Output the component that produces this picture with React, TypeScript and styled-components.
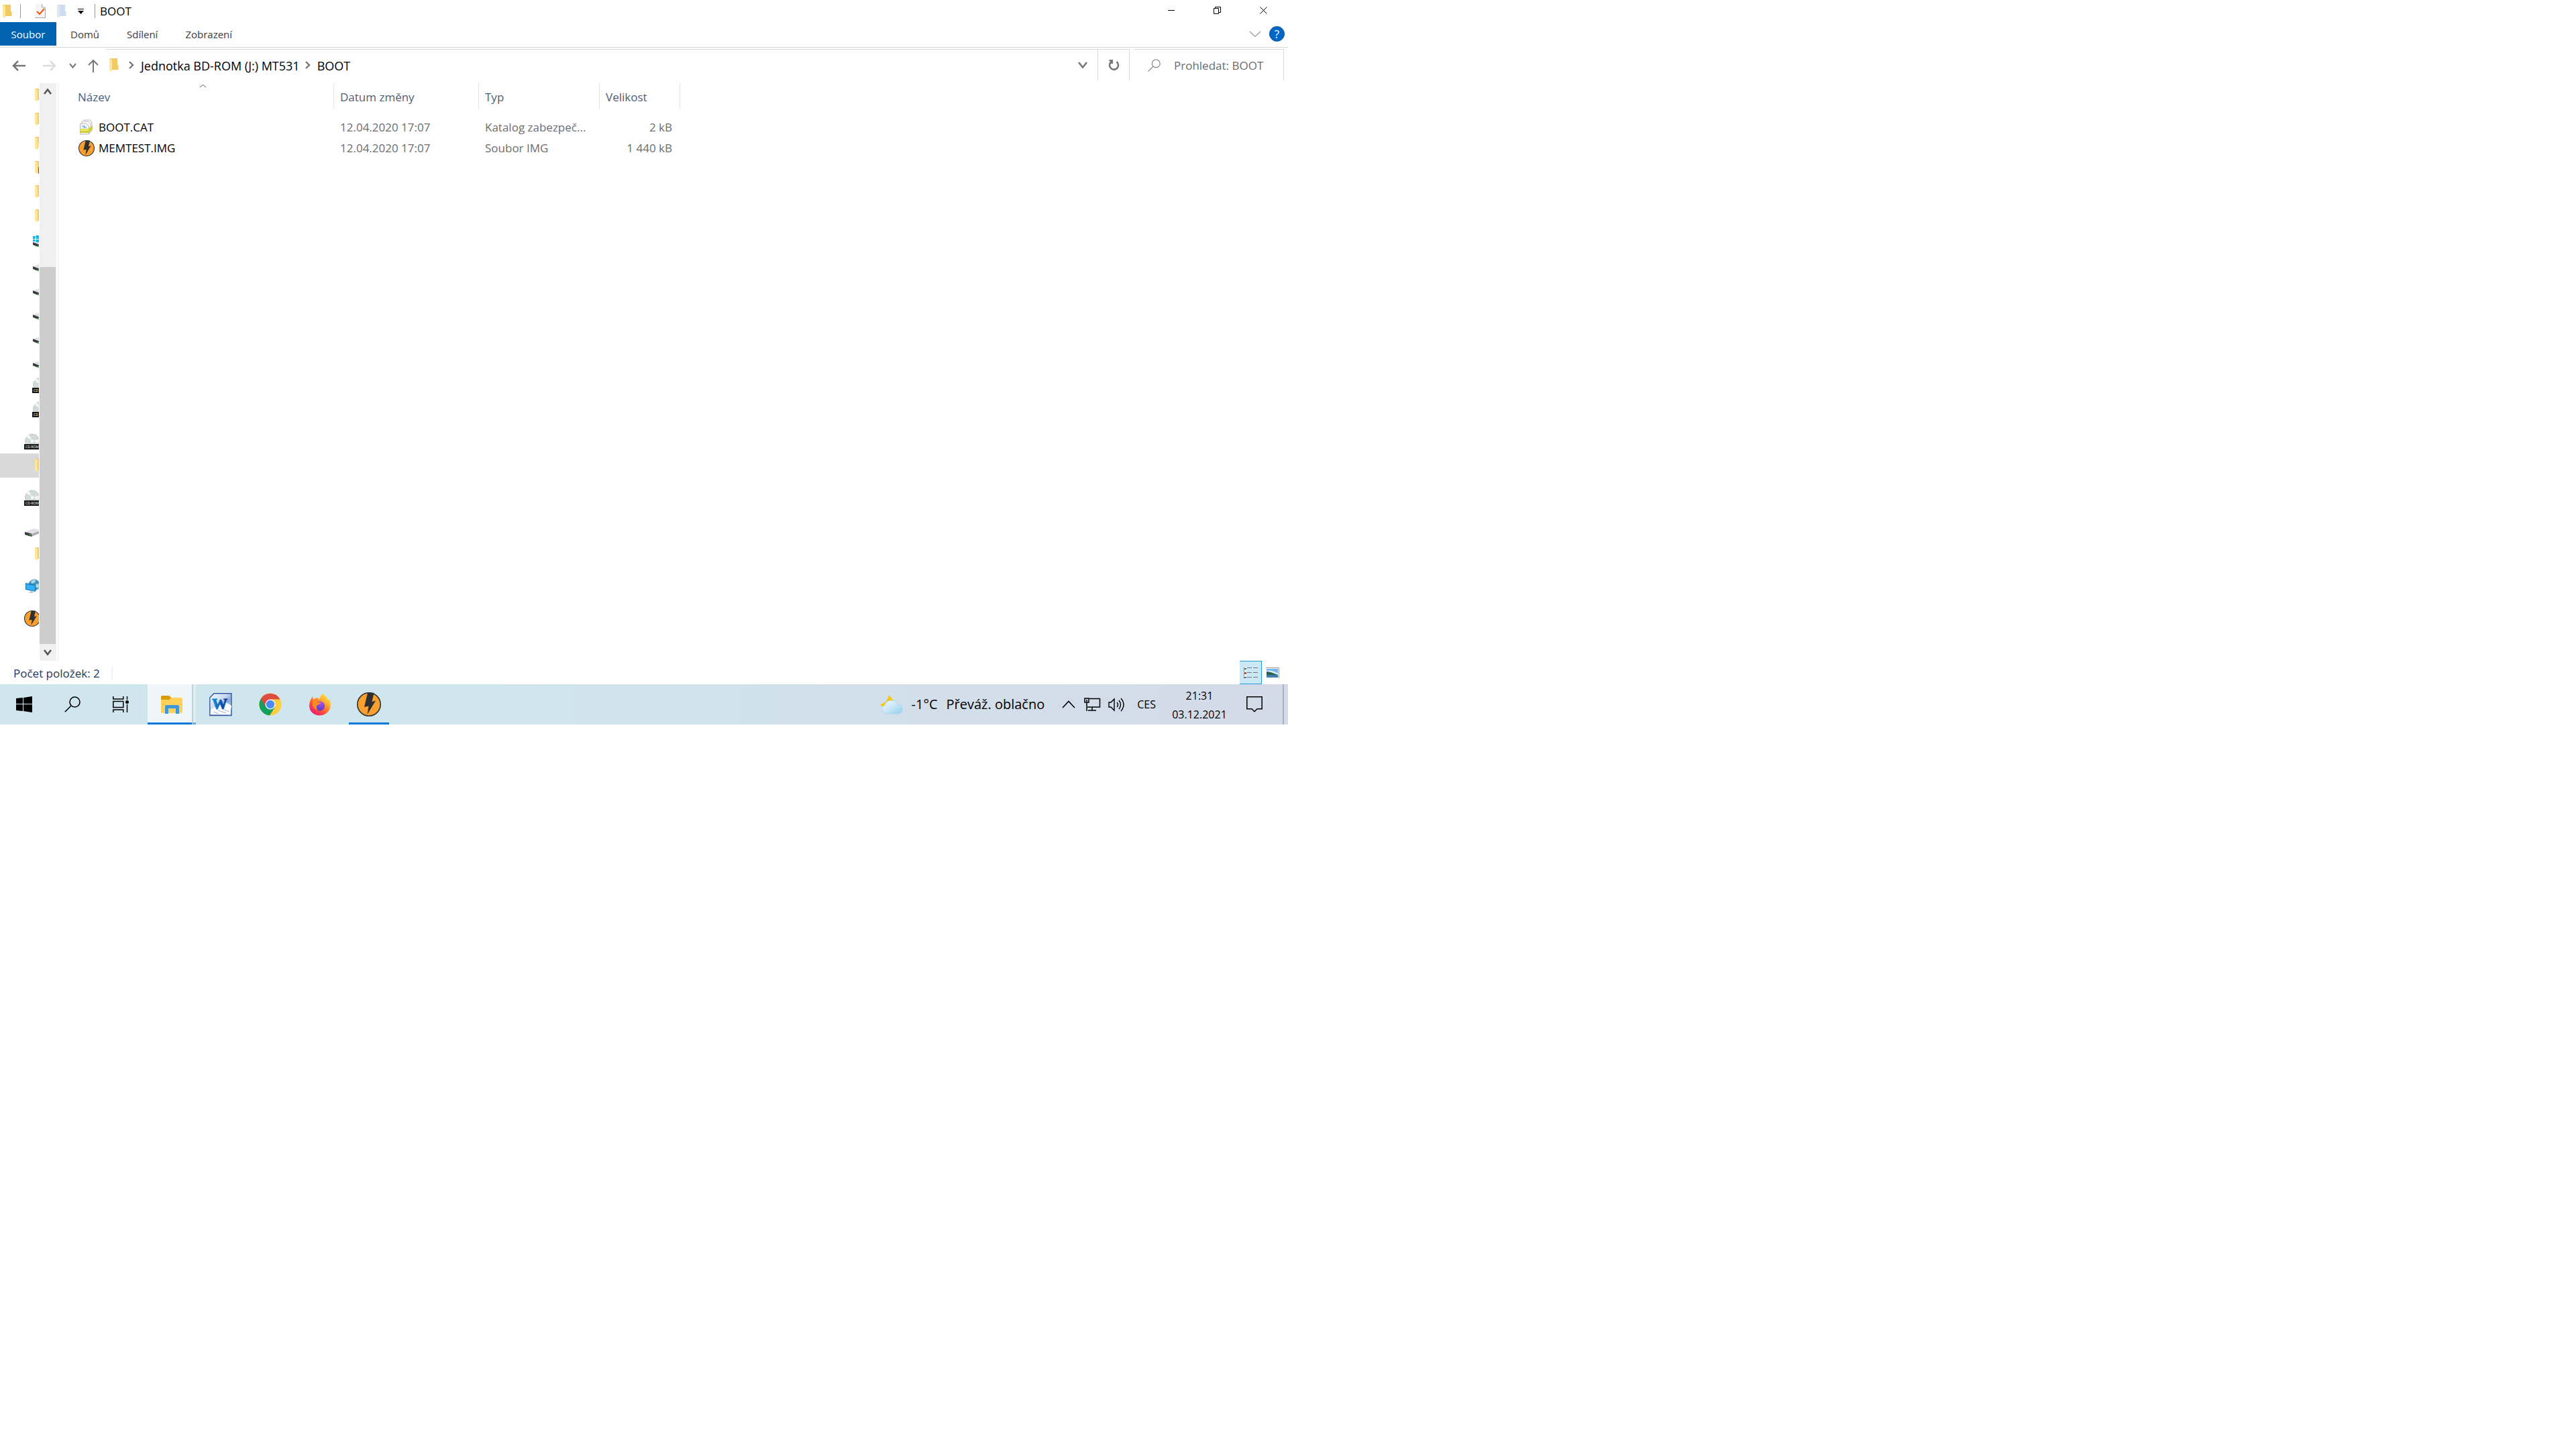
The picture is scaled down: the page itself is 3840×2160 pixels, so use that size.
import React from 'react';
import styled, { createGlobalStyle } from 'styled-components';

const GlobalStyle = createGlobalStyle`
  *, *::before, *::after { box-sizing: border-box; }
  body { margin: 0; background: #fff; font-family: "Open Sans", "Noto Sans", sans-serif; }
  button, input { font: inherit; color: inherit; }
  svg { display: block; flex: none; }
`;

const Desktop = styled.main`
  display: flex;
  flex-direction: column;
  width: 50%;
  height: 50vh;
  font-size: 17px;
  line-height: 24px;
  color: #000;
`;

const BareButton = styled.button`
  display: flex;
  align-items: center;
  justify-content: center;
  padding: 0;
  border: 0;
  background: none;
`;

/* ---------- title bar and ribbon ---------- */

const TitleBar = styled.header`
  display: flex;
  align-items: center;
  height: 33px;
  padding-left: 4px;
`;

const QuickAccess = styled.div`
  display: flex;
  align-items: center;
  flex: 1;
`;

const ToolDivider = styled.span`
  width: 1px;
  height: 21px;
  background: #9a9a9a;
`;

const QuickButton = styled(BareButton)<{ $gap: number }>`
  margin-left: ${(p) => p.$gap}px;
  height: 28px;
`;

const WindowTitle = styled.h1`
  margin: 0 0 0 7px;
  font-size: 17px;
  line-height: 24px;
  font-weight: 400;
`;

const WindowButton = styled(BareButton)`
  width: 69px;
  height: 31px;
`;

const WindowButtons = styled.div`
  display: flex;
  align-self: flex-start;
  padding-right: 2px;
`;

const Ribbon = styled.nav`
  display: flex;
  height: 38px;
  padding-bottom: 2px;
  border-bottom: 1px solid #d8d8d8;
  font-size: 15px;
  color: #3c3c3c;
`;

const FileTab = styled.button`
  width: 84px;
  padding: 0;
  border: 0;
  background: #0063b1;
  color: #fff;
`;

const RibbonTab = styled.button`
  padding: 1px 0 0 21px;
  margin-right: 20px;
  border: 0;
  background: none;
`;

const RibbonTools = styled.div`
  display: flex;
  align-items: center;
  gap: 12px;
  margin-left: auto;
  padding-right: 5px;
`;

const HelpButton = styled(BareButton)`
  width: 23px;
  height: 23px;
  border: 1px solid #0a4f8f;
  border-radius: 50%;
  background: #0067c8;
  color: #fff;
  font-size: 17px;
  line-height: 20px;
`;

/* ---------- address bar ---------- */

const AddressRow = styled.div`
  display: flex;
  height: 51px;
  padding: 2px 6px 2px 0;
`;

const NavButtons = styled.div`
  display: flex;
  align-items: center;
  width: 158px;
  padding: 2px 0 0 18px;
`;

const NavButton = styled(BareButton)<{ $after: number }>`
  margin-right: ${(p) => p.$after}px;
`;

const Breadcrumb = styled.nav`
  display: flex;
  align-items: center;
  flex: 1;
  padding-left: 5px;
  border-top: 1px solid #d9d9d9;
`;

const Crumb = styled.a`
  margin: 2px 8px 0 10px;
  color: inherit;
  font-size: 18px;
  text-decoration: none;
`;

const CrumbIcon = styled.span`
  margin-right: 15px;
`;

const AddressDrop = styled(BareButton)`
  width: 46px;
  height: 46px;
  margin-left: auto;
  border-right: 1px solid #d9d9d9;
`;

const RefreshButton = styled(BareButton)`
  width: 47px;
  border: 1px solid #d9d9d9;
  border-width: 1px 1px 0 0;
`;

const SearchBox = styled.label`
  display: flex;
  align-items: center;
  gap: 20px;
  width: 224px;
  margin-left: 6px;
  padding-left: 21px;
  border: 1px solid #d9d9d9;
  border-width: 1px 1px 0 0;
  color: #6d6d6d;
`;

const SearchInput = styled.input`
  flex: 1;
  min-width: 0;
  padding: 2px 0 0;
  border: 0;
  outline: 0;
  background: none;
  &::placeholder { color: #6d6d6d; opacity: 1; }
`;

/* ---------- body ---------- */

const Body = styled.div`
  display: flex;
  flex: 1;
  min-height: 0;
`;

const Tree = styled.ul`
  width: 58px;
  margin: 0;
  padding: 2px 0 0;
  overflow: hidden;
  list-style: none;
`;

const TreeItem = styled.li<{ $indent: number; $root?: boolean; $selected?: boolean }>`
  display: flex;
  align-items: center;
  height: 36px;
  margin-top: ${(p) => (p.$root ? 12 : 0)}px;
  padding-left: ${(p) => p.$indent}px;
  background: ${(p) => (p.$selected ? '#d9d9d9' : 'transparent')};
`;

const Scrollbar = styled.div`
  display: flex;
  flex-direction: column;
  width: 25px;
  margin: 2px 2px 0 1px;
  background: #f0f0f0;
`;

const ScrollButton = styled(BareButton)`
  height: 25px;
  padding-right: 1px;
`;

const ScrollTrack = styled.div`
  display: flex;
  flex: 1;
  flex-direction: column;
  justify-content: flex-end;
  padding-right: 1px;
`;

const ScrollThumb = styled.div`
  height: 69.3%;
  background: #cdcdcd;
`;

const Splitter = styled.div`
  width: 2px;
  margin-top: 2px;
  background: #f5f5f5;
`;

const Files = styled.section`
  flex: 1;
  padding-top: 2px;
`;

const FileTable = styled.table`
  table-layout: fixed;
  width: 926px;
  border-spacing: 0;
  color: #6d6d6d;
  tbody::before { content: ""; display: block; height: 11px; }
`;

const HeadCell = styled.th<{ $first?: boolean }>`
  position: relative;
  height: 39px;
  padding: 3px 0 0 ${(p) => (p.$first ? 28 : 9)}px;
  border-right: 1px solid #e3e3e3;
  color: #4c607a;
  font-size: 17px;
  font-weight: 400;
  text-align: left;
`;

const SortMark = styled.span`
  position: absolute;
  top: 1px;
  left: calc(50% + 4px);
`;

const Cell = styled.td<{ $right?: boolean }>`
  height: 31px;
  padding: 0 ${(p) => (p.$right ? 12 : 14)}px 0 9px;
  overflow: hidden;
  white-space: nowrap;
  text-overflow: ellipsis;
  text-align: ${(p) => (p.$right ? 'right' : 'left')};
`;

const NameCell = styled(Cell)`
  padding-left: 29px;
  color: #000;
`;

const FileName = styled.div`
  display: flex;
  align-items: center;
  gap: 6px;
`;

const Status = styled.footer`
  display: flex;
  align-items: center;
  height: 35px;
  padding: 0 13px 0 20px;
  color: #1e395b;
`;

const StatusText = styled.span`
  padding-top: 2px;
`;

const StatusDivider = styled.span`
  width: 2px;
  height: 20px;
  margin-left: 17px;
  background: #f2f2f2;
`;

const ViewButtons = styled.div`
  display: flex;
  align-items: center;
  gap: 6px;
  margin-left: auto;
`;

const DetailsButton = styled(BareButton)`
  width: 33px;
  height: 35px;
  border: 1px solid #26a0da;
  border-left: 0;
  background: #cbe8f6;
`;

/* ---------- taskbar ---------- */

const Taskbar = styled.footer`
  display: flex;
  height: 60px;
  background: linear-gradient(90deg, #d0e6ee 0%, #d0e6ee 36%, #d2dfea 72%, #d4dae8 100%);
`;

const TaskButton = styled(BareButton)<{ $width: number; $active?: boolean; $line?: boolean; $before?: number }>`
  position: relative;
  width: ${(p) => p.$width}px;
  margin-left: ${(p) => p.$before || 0}px;
  padding-top: ${(p) => (p.$line ? 3 : 0)}px;
  border-bottom: ${(p) => (p.$line ? '3px solid #0078d7' : '0')};
  background: ${(p) => (p.$active ? '#eff6f9' : 'none')};
`;

const StackEdge = styled.span`
  position: absolute;
  top: 0;
  right: 0;
  bottom: -3px;
  width: 6px;
  border-left: 2px solid #bfd2dc;
  border-bottom: 3px solid #66abe4;
  background: #e0eef4;
`;

const Tray = styled.div`
  display: flex;
  align-items: center;
  margin-left: auto;
`;

const Weather = styled(BareButton)`
  gap: 13px;
  margin-right: 26px;
  font-size: 20px;
`;

const TrayButton = styled(BareButton)<{ $after: number }>`
  margin-right: ${(p) => p.$after}px;
  font-size: 16px;
`;

const Clock = styled(BareButton)`
  flex-direction: column;
  gap: 4px;
  width: 84px;
  margin-right: 28px;
  padding-top: 1px;
  font-size: 16px;
`;

const ShowDesktop = styled.button`
  align-self: stretch;
  width: 8px;
  padding: 0;
  border: 0;
  border-left: 2px solid #a9b1c0;
  background: none;
`;

/* ---------- icons ---------- */

const FolderIcon = ({ blue }: { blue?: boolean }) => (
  <svg width="14" height="20" viewBox="0 0 14 20" aria-hidden="true">
    <path d="M0 0h12v10h1.500v7H4z" fill={blue ? '#cddcf0' : '#f0cb63'} />
    <path d="M0 0l4 2v18l-4-2z" fill={blue ? '#dde8f6' : '#ffe69c'} />
  </svg>
);

const TreeFolder = ({ mark }: { mark?: string }) => (
  <svg width="14" height="20" viewBox="0 0 14 20" aria-hidden="true">
    <path d="M0 0h12v17H3z" fill="#f0cb6a" />
    <path d="M0 0l4 2v18l-4-3z" fill="#ffe69c" />
    {mark && <path d="M5 9h8v10H5z" fill={mark} />}
  </svg>
);

const SmallDrive = ({ windows }: { windows?: boolean }) => (
  <svg width="24" height="24" viewBox="0 0 24 24" aria-hidden="true">
    <path d="M0 16l9-4 13 2v4l-9 5z" fill="#dcdee2" />
    <path d="M0 15l10 4v4L0 19z" fill="#3a3c3d" />
    <path d="M7 20h2v2H7z" fill="#3ecb4c" />
    {windows && <path d="M0 6h3.500v4H0zM4.500 5H9v5H4.500zM0 11h3.500v3H0zM4.500 11H9v4H4.500z" fill="#00b7f1" />}
  </svg>
);

const RootDrive = () => (
  <svg width="24" height="24" viewBox="0 0 24 24" aria-hidden="true">
    <path d="M0 15l13-5 11 2v4l-14 5z" fill="#dfe1e5" />
    <path d="M10 18l14-5v3l-14 6z" fill="#a8abb0" />
    <path d="M0 15l10 2.500v4.500L0 19z" fill="#3a3c3d" />
    <path d="M7 18h2v2H7z" fill="#3ecb4c" />
  </svg>
);

const Disc = ({ label }: { label: string }) => (
  <svg width="24" height="24" viewBox="0 0 24 24" aria-hidden="true">
    <circle cx="12" cy="11.500" r="10.500" fill="#d3dbd9" stroke="#b3bdbb" strokeWidth=".8" />
    <path d="M12 11L3 5l4-3zM12 11l9 4 1-6z" fill="#f3f7f6" />
    <circle cx="12" cy="11.500" r="3" fill="#f7fafa" stroke="#b7c1c0" strokeWidth=".6" />
    <path d="M0 16h24v8H0z" fill="#161616" />
    <text x="2" y="22" fontSize="5" fill="#fff" fontFamily="Open Sans, sans-serif">{label}</text>
  </svg>
);

const NetworkIcon = () => (
  <svg width="24" height="24" viewBox="0 0 24 24" aria-hidden="true">
    <circle cx="13" cy="10" r="8.500" fill="#3f93bd" />
    <path d="M8 4q4-3 8-1l-3 4-4 1zM16 8l5 1-2 6-4-2z" fill="#a7d8e6" />
    <path d="M0 7l15 3v10L0 17z" fill="#1c6fae" />
    <path d="M1 8.500l13 2.500v8L1 16z" fill="#2fb0f8" />
    <path d="M4 21l5-2 4 2-4 1z" fill="#bcc7cf" />
  </svg>
);

const BoltIcon = ({ size }: { size: number }) => (
  <svg width={size} height={size} viewBox="0 0 36 36" aria-hidden="true">
    <circle cx="18" cy="18" r="17.200" fill="#fba02e" stroke="#2e3032" strokeWidth="1.600" />
    <path d="M16 .8h9.500L22.500 14l5.500-1.500L15.500 33l2-12.500L11 22z" fill="#2e3032" />
  </svg>
);

const CatalogIcon = () => (
  <svg width="24" height="24" viewBox="0 0 24 24" aria-hidden="true">
    <path d="M8 1h9l3 3v13l-4 4H8z" fill="#f4f4f4" stroke="#bdbdbd" />
    <path d="M5 3h9l4 4v12H5z" fill="#fff" stroke="#bdbdbd" />
    <path d="M2.500 6h9l4 4v12h-13z" fill="#f7f7f7" stroke="#b5b5b5" />
    <path d="M5 10h5M7 12h5" stroke="#4a88d0" />
    <path d="M2 14h13l6-5v5l-6 6H2z" fill="#cfd02c" />
    <path d="M3 15h12v2H3z" fill="#f3f17b" />
  </svg>
);

const Chevron = ({ w, h, d, color, stroke }: { w: number; h: number; d: 'up' | 'down' | 'right'; color: string; stroke: number }) => {
  const paths = {
    up: `M1 ${h - 1}L${w / 2} 1.500L${w - 1} ${h - 1}`,
    down: `M1 1L${w / 2} ${h - 1.5}L${w - 1} 1`,
    right: `M1 1L${w - 2} ${h / 2}L1 ${h - 1}`,
  };
  return (
    <svg width={w} height={h} viewBox={`0 0 ${w} ${h}`} aria-hidden="true">
      <path d={paths[d]} fill="none" stroke={color} strokeWidth={stroke} />
    </svg>
  );
};

const Arrow = ({ kind }: { kind: 'back' | 'forward' | 'up' }) => {
  const d = { back: 'M20 9H2M9 2L2 9l7 7', forward: 'M0 9h18M11 2l7 7-7 7', up: 'M8 20V2M1 9l7-7 7 7' }[kind];
  return (
    <svg width={kind === 'up' ? 16 : 20} height={kind === 'up' ? 20 : 18} aria-hidden="true">
      <path d={d} fill="none" stroke={kind === 'forward' ? '#dcdcdc' : '#777'} strokeWidth={kind === 'up' ? 2 : 2.5} />
    </svg>
  );
};

const SheetIcon = () => (
  <svg width="17" height="21" aria-hidden="true">
    <path d="M.5.5h10l5 5v15H.5z" fill="#f5f5f5" />
    <path d="M10.500 0v5h5v15.500H0" fill="none" stroke="#a6a6a6" />
    <path d="M3 11l4 4 7-8" fill="none" stroke="#f0560e" strokeWidth="2" />
  </svg>
);

const QuickMenuIcon = () => (
  <svg width="9" height="8" aria-hidden="true"><path d="M0 0h9v1H0zM0 3h9L4.500 8z" fill="#000" /></svg>
);

const RefreshIcon = () => (
  <svg width="17" height="18" viewBox="0 0 17 18" aria-hidden="true">
    <path d="M12.500 4a6.500 6.500 0 1 1-8.500 .5" fill="none" stroke="#777" strokeWidth="2.600" />
    <path d="M1 1h6v6H4.500z" fill="#777" />
  </svg>
);

const Magnifier = ({ size, color, stroke }: { size: number; color: string; stroke: number }) => (
  <svg width={size} height={size} viewBox="0 0 24 24" aria-hidden="true">
    <circle cx="15.500" cy="8.500" r="7.500" fill="none" stroke={color} strokeWidth={stroke} />
    <path d="M10 14L.8 23.300" stroke={color} strokeWidth={stroke} />
  </svg>
);

const DetailsIcon = () => (
  <svg width="21" height="18" aria-hidden="true">
    <path d="M0 0h4v18H0z" fill="#fff" />
    <path d="M.5 0v18" stroke="#999" />
    <path d="M1 2h3v2H1zM1 15h3v2H1z" fill="#3b6ea8" />
    <path d="M1 8h3v3H1z" fill="#c8502c" />
    <path d="M5 1.500h7M14 1.500h7M5 8.500h7M14 8.500h7M5 15.500h7M14 15.500h7" stroke="#777" />
  </svg>
);

const PictureIcon = () => (
  <svg width="20" height="16" aria-hidden="true">
    <path d="M0 .5h19.500V16" fill="none" stroke="#999" />
    <path d="M1 2h17v13H1z" fill="#76b4f2" />
    <path d="M1 5q8-2 17 4v2H1z" fill="#d6ecfa" />
    <path d="M1 6l6 1 11 4v1H1z" fill="#2c6148" />
    <path d="M1 11h17v4H1z" fill="#3f7bab" />
  </svg>
);

const WindowsIcon = () => (
  <svg width="24" height="24" aria-hidden="true">
    <path d="M0 3l10-1v9H0zM11 2l13-2v11H11zM0 12h10v10L0 21zM11 12h13v12l-13-2z" />
  </svg>
);

const TaskViewIcon = () => (
  <svg width="24" height="24" aria-hidden="true" fill="none" stroke="#000" strokeWidth="1.500">
    <path d="M.8 0v4h15V0M.8 24v-4h15v4M.8 7.500h15v9H.8zM21.500 0v5M21.500 12v12" />
    <circle cx="21.500" cy="8.500" r="2.500" fill="#000" stroke="none" />
  </svg>
);

const ExplorerIcon = () => (
  <svg width="32" height="27" aria-hidden="true">
    <path d="M0 2q0-2 2-2h10l3 3h14q3 0 3 3v17q0 3-3 3H2q-2 0-2-2z" fill="#ffd159" />
    <path d="M0 6V2q0-2 2-2h10l3 3-3 3z" fill="#d99a0b" />
    <path d="M6 27V16q0-2 2-2h17q2 0 2 2v11h-5v-8H11v8z" fill="#3c97dd" />
  </svg>
);

const WordIcon = () => (
  <svg width="34" height="35" viewBox="0 0 34 35" aria-hidden="true">
    <defs>
      <linearGradient id="wordPage" x1="0" y1="0" x2="1" y2="1">
        <stop offset="0" stopColor="#f5f9fe" /><stop offset=".4" stopColor="#cddcf3" /><stop offset=".6" stopColor="#8ba6d8" /><stop offset="1" stopColor="#dce7f7" />
      </linearGradient>
      <linearGradient id="wordLetter" x1="0" y1="0" x2="1" y2="0">
        <stop offset="0" stopColor="#1193dc" /><stop offset="1" stopColor="#0b3292" />
      </linearGradient>
    </defs>
    <path d="M7 .8h26v32.700H.8V7z" fill="url(#wordPage)" stroke="#34589c" strokeWidth="1.400" />
    <path d="M2 26l3-3 20-9 8 5-2 13H1.500z" fill="#fff" />
    <path d="M6 28l8 3M13 26l12 4M22 25l8 3" stroke="#9db2d8" />
    <text x="4" y="24" fontFamily="Liberation Serif, serif" fontWeight="700" fontSize="23" fill="url(#wordLetter)" stroke="url(#wordLetter)">W</text>
  </svg>
);

const ChromeIcon = () => (
  <svg width="34" height="34" viewBox="0 0 34 34" aria-hidden="true">
    <circle cx="17" cy="17" r="16.500" fill="#ffcd40" />
    <path d="M17 17L2.700 8.700A16.500 16.500 0 0 0 16 33.500L24 21z" fill="#159f5c" />
    <path d="M2.700 8.700A16.500 16.500 0 0 1 31.500 9.500H17L9.700 20z" fill="#dc4c40" />
    <circle cx="17" cy="17" r="7.500" fill="#fff" />
    <circle cx="17" cy="17" r="6.200" fill="#4c8bf5" />
  </svg>
);

const FirefoxIcon = () => (
  <svg width="32" height="33" viewBox="0 0 32 33" aria-hidden="true">
    <defs>
      <linearGradient id="foxBody" x1="1" y1="0" x2=".2" y2="1">
        <stop offset="0" stopColor="#fff24a" /><stop offset=".35" stopColor="#ffb52e" /><stop offset=".65" stopColor="#ff5a35" /><stop offset="1" stopColor="#ed0f78" />
      </linearGradient>
      <radialGradient id="foxGlobe" cx=".6" cy=".2" r=".9">
        <stop offset="0" stopColor="#a94cf5" /><stop offset="1" stopColor="#4b3db4" />
      </radialGradient>
    </defs>
    <path d="M20 0q7 5 8 10l2-2q5 13-3 20-7 6-16 4Q1 29 0 19 0 11 5 4l1 5q3-3 6-3l3 2q1-4 5-8z" fill="url(#foxBody)" />
    <circle cx="16" cy="18.500" r="7" fill="url(#foxGlobe)" />
    <path d="M5 8q6 1 8 5h4q-1 3-5 4-3 4 1 7-6 0-8-6z" fill="#ff8b1c" />
  </svg>
);

const WeatherIcon = () => (
  <svg width="34" height="29" viewBox="0 0 34 29" aria-hidden="true">
    <defs>
      <linearGradient id="cloud" x1="0" y1="0" x2="1" y2="1">
        <stop offset="0" stopColor="#f4faff" /><stop offset=".55" stopColor="#c3e4f6" /><stop offset="1" stopColor="#8fcdf0" />
      </linearGradient>
    </defs>
    <path d="M13 0l6 7 1 4-12 8-8-4 7-4q4-2 6-11z" fill="#fbc506" />
    <path d="M8 28a7 7 0 0 1-1-13q2-7 10-7 7 0 9 6 7 0 7 7 0 6-6 7z" fill="url(#cloud)" stroke="#a8d4ec" strokeWidth=".8" />
  </svg>
);

const LanIcon = () => (
  <svg width="25" height="21" aria-hidden="true" fill="none" stroke="#000" strokeWidth="1.500">
    <path d="M8 1.500h15.500V14H5M12 14v5M6 19h12M1 1h6v6H1zM4 3v3M4 7v13" />
  </svg>
);

const SoundIcon = () => (
  <svg width="25" height="21" aria-hidden="true" fill="none" stroke="#000" strokeWidth="1.400">
    <path d="M1 7h3l5-5v17l-5-5H1zM13 7q3 3.500 0 7M16 4q5 6.500 0 13M19 1q8 9.500 0 19" />
  </svg>
);

const NoteIcon = () => (
  <svg width="24" height="24" aria-hidden="true">
    <path d="M.8.8h22.400v18H16l-4 4-4-4H.8z" fill="none" stroke="#000" strokeWidth="1.500" />
  </svg>
);

/* ---------- data ---------- */

const files = [
  { name: 'BOOT.CAT', icon: <CatalogIcon />, date: '12.04.2020 17:07', type: 'Katalog zabezpeč...', size: '2 kB' },
  { name: 'MEMTEST.IMG', icon: <BoltIcon size={24} />, date: '12.04.2020 17:07', type: 'Soubor IMG', size: '1 440 kB' },
];

const tree: { icon: React.ReactNode; indent: number; root?: boolean; selected?: boolean }[] = [
  { icon: <TreeFolder />, indent: 52 },
  { icon: <TreeFolder />, indent: 52 },
  { icon: <TreeFolder mark="#f3f3f3" />, indent: 52 },
  { icon: <TreeFolder mark="#0f6fc0" />, indent: 52 },
  { icon: <TreeFolder />, indent: 52 },
  { icon: <TreeFolder />, indent: 52 },
  { icon: <SmallDrive windows />, indent: 49 },
  { icon: <SmallDrive />, indent: 49 },
  { icon: <SmallDrive />, indent: 49 },
  { icon: <SmallDrive />, indent: 49 },
  { icon: <SmallDrive />, indent: 49 },
  { icon: <SmallDrive />, indent: 49 },
  { icon: <Disc label="CD" />, indent: 48 },
  { icon: <Disc label="CD" />, indent: 48 },
  { icon: <Disc label="CD-ROM" />, indent: 36, root: true },
  { icon: <TreeFolder />, indent: 52, selected: true },
  { icon: <Disc label="CD-ROM" />, indent: 36, root: true },
  { icon: <RootDrive />, indent: 37, root: true },
  { icon: <TreeFolder />, indent: 52 },
  { icon: <NetworkIcon />, indent: 38, root: true },
  { icon: <BoltIcon size={24} />, indent: 36, root: true },
];

export default function App() {
  return (
    <>
      <GlobalStyle />
      <Desktop>
        <TitleBar>
          <QuickAccess>
            <FolderIcon />
            <QuickButton as="span" $gap={12}><ToolDivider /></QuickButton>
            <QuickButton $gap={21} aria-label="Vlastnosti"><SheetIcon /></QuickButton>
            <QuickButton $gap={16} aria-label="Nová složka"><FolderIcon blue /></QuickButton>
            <QuickButton $gap={17} aria-label="Přizpůsobit panel"><QuickMenuIcon /></QuickButton>
            <QuickButton as="span" $gap={16}><ToolDivider /></QuickButton>
            <WindowTitle>BOOT</WindowTitle>
          </QuickAccess>
          <WindowButtons>
            <WindowButton aria-label="Minimalizovat"><svg width="10" height="11"><path d="M0 5.500h10" stroke="#000" /></svg></WindowButton>
            <WindowButton aria-label="Obnovit"><svg width="11" height="11"><path d="M.5 2.500h7v8h-7zM2.500 2V.5h8v8H8" fill="none" stroke="#000" /></svg></WindowButton>
            <WindowButton aria-label="Zavřít"><svg width="11" height="11"><path d="M.5.5l10 10M10.500.5l-10 10" stroke="#000" /></svg></WindowButton>
          </WindowButtons>
        </TitleBar>

        <Ribbon>
          <FileTab>Soubor</FileTab>
          <RibbonTab>Domů</RibbonTab>
          <RibbonTab>Sdílení</RibbonTab>
          <RibbonTab>Zobrazení</RibbonTab>
          <RibbonTools>
            <BareButton aria-label="Rozbalit pás karet"><Chevron w={18} h={10} d="down" color="#999" stroke={1.2} /></BareButton>
            <HelpButton aria-label="Nápověda">?</HelpButton>
          </RibbonTools>
        </Ribbon>

        <AddressRow>
          <NavButtons>
            <NavButton $after={26} aria-label="Zpět"><Arrow kind="back" /></NavButton>
            <NavButton $after={19} aria-label="Vpřed"><Arrow kind="forward" /></NavButton>
            <NavButton $after={17} aria-label="Poslední umístění"><Chevron w={11} h={8} d="down" color="#777" stroke={2} /></NavButton>
            <NavButton $after={0} aria-label="Nahoru"><Arrow kind="up" /></NavButton>
          </NavButtons>
          <Breadcrumb>
            <CrumbIcon><FolderIcon /></CrumbIcon>
            <Chevron w={8} h={12} d="right" color="#777" stroke={2.4} />
            <Crumb href="#drive">Jednotka BD-ROM (J:) MT531</Crumb>
            <Chevron w={8} h={12} d="right" color="#777" stroke={2.4} />
            <Crumb href="#boot">BOOT</Crumb>
            <AddressDrop aria-label="Předchozí umístění"><Chevron w={14} h={10} d="down" color="#777" stroke={2.6} /></AddressDrop>
          </Breadcrumb>
          <RefreshButton aria-label="Aktualizovat"><RefreshIcon /></RefreshButton>
          <SearchBox>
            <Magnifier size={19} color="#777" stroke={1.4} />
            <SearchInput type="text" placeholder="Prohledat: BOOT" aria-label="Prohledat: BOOT" />
          </SearchBox>
        </AddressRow>

        <Body>
          <Tree>
            {tree.map((t, i) => (
              <TreeItem key={i} $indent={t.indent} $root={t.root} $selected={t.selected}>{t.icon}</TreeItem>
            ))}
          </Tree>
          <Scrollbar>
            <ScrollButton aria-label="Posunout nahoru"><Chevron w={12} h={9} d="up" color="#555" stroke={2.6} /></ScrollButton>
            <ScrollTrack><ScrollThumb /></ScrollTrack>
            <ScrollButton aria-label="Posunout dolů"><Chevron w={12} h={9} d="down" color="#555" stroke={2.6} /></ScrollButton>
          </Scrollbar>
          <Splitter />
          <Files>
            <FileTable>
              <colgroup>
                <col style={{ width: 410 }} />
                <col style={{ width: 216 }} />
                <col style={{ width: 180 }} />
                <col style={{ width: 120 }} />
              </colgroup>
              <thead>
                <tr>
                  <HeadCell $first>
                    Název
                    <SortMark><Chevron w={11} h={6} d="up" color="#555" stroke={1} /></SortMark>
                  </HeadCell>
                  <HeadCell>Datum změny</HeadCell>
                  <HeadCell>Typ</HeadCell>
                  <HeadCell>Velikost</HeadCell>
                </tr>
              </thead>
              <tbody>
                {files.map((f) => (
                  <tr key={f.name}>
                    <NameCell><FileName>{f.icon}{f.name}</FileName></NameCell>
                    <Cell>{f.date}</Cell>
                    <Cell>{f.type}</Cell>
                    <Cell $right>{f.size}</Cell>
                  </tr>
                ))}
              </tbody>
            </FileTable>
          </Files>
        </Body>

        <Status>
          <StatusText>Počet položek: 2</StatusText>
          <StatusDivider />
          <ViewButtons>
            <DetailsButton aria-label="Podrobnosti"><DetailsIcon /></DetailsButton>
            <BareButton aria-label="Velké ikony"><PictureIcon /></BareButton>
          </ViewButtons>
        </Status>

        <Taskbar>
          <TaskButton $width={72} aria-label="Start"><WindowsIcon /></TaskButton>
          <TaskButton $width={72} aria-label="Hledat"><Magnifier size={24} color="#000" stroke={1.6} /></TaskButton>
          <TaskButton $width={72} aria-label="Zobrazení úloh"><TaskViewIcon /></TaskButton>
          <TaskButton $width={72} $before={4} $active $line aria-label="Průzkumník souborů">
            <ExplorerIcon />
            <StackEdge />
          </TaskButton>
          <TaskButton $width={74} aria-label="Word"><WordIcon /></TaskButton>
          <TaskButton $width={74} aria-label="Chrome"><ChromeIcon /></TaskButton>
          <TaskButton $width={74} aria-label="Firefox"><FirefoxIcon /></TaskButton>
          <TaskButton $width={60} $before={6} $line aria-label="DAEMON Tools"><BoltIcon size={36} /></TaskButton>
          <Tray>
            <Weather>
              <WeatherIcon />
              <span>-1°C</span>
              <span>Převáž. oblačno</span>
            </Weather>
            <TrayButton $after={13} aria-label="Skryté ikony"><Chevron w={20} h={12} d="up" color="#000" stroke={1.6} /></TrayButton>
            <TrayButton $after={11} aria-label="Síť"><LanIcon /></TrayButton>
            <TrayButton $after={18} aria-label="Hlasitost"><SoundIcon /></TrayButton>
            <TrayButton $after={23}>CES</TrayButton>
            <Clock>
              <span>21:31</span>
              <span>03.12.2021</span>
            </Clock>
            <TrayButton $after={30} aria-label="Centrum akcí"><NoteIcon /></TrayButton>
            <ShowDesktop aria-label="Zobrazit plochu" />
          </Tray>
        </Taskbar>
      </Desktop>
    </>
  );
}
